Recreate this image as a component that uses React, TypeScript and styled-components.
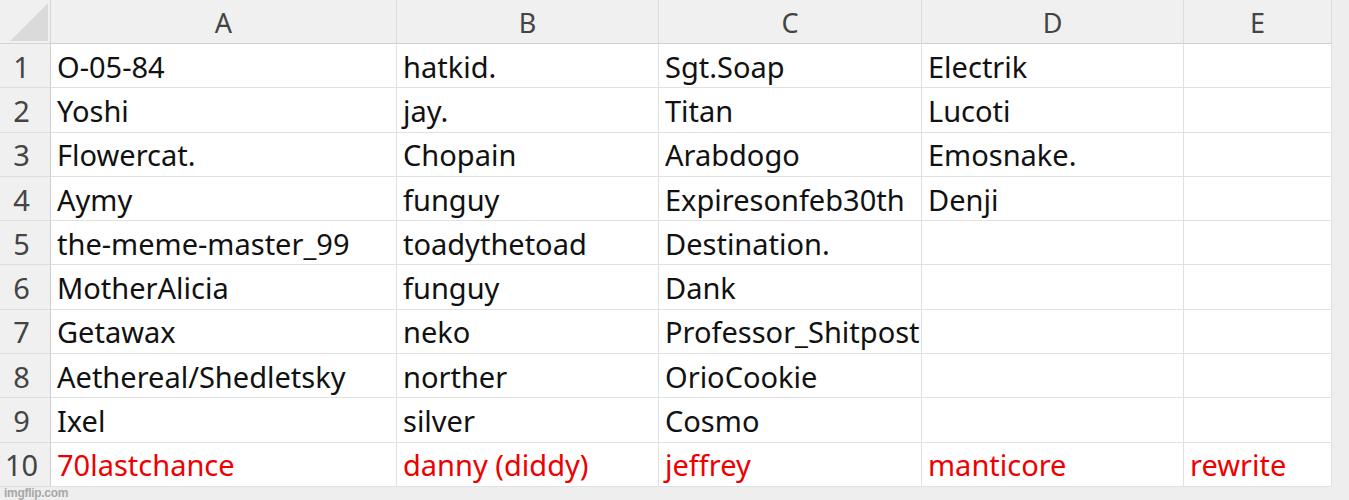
import React from "react";
import styled, { createGlobalStyle } from "styled-components";

const Global = createGlobalStyle`
  html, body { margin: 0; padding: 0; background: #eeeeee; }
  body { font-family: "Noto Sans", "Open Sans", sans-serif; }
`;

const Page = styled.div`
  position: relative;
  width: 1349px;
  height: 500px;
  background: #eeeeee;
  overflow: hidden;
`;

const Sheet = styled.div`
  display: grid;
  grid-template-columns: 51px 346px 262px 263px 262px 148px;
  grid-template-rows: 44px repeat(10, 44.3px);
  width: 1332px;
  background: #ffffff;
`;

const Corner = styled.div`
  background: #f0f0f0;
  border-right: 1px solid #d4d4d4;
  border-bottom: 1px solid #d4d4d4;
  box-sizing: border-box;
  display: flex;
  align-items: flex-end;
  justify-content: flex-end;
  padding: 0 2px 2px 0;
`;

const ColHead = styled.div`
  background: #f0f0f0;
  border-right: 1px solid #dcdcdc;
  border-bottom: 1px solid #d0d0d0;
  box-sizing: border-box;
  display: flex;
  align-items: center;
  justify-content: center;
  color: #444444;
  font-size: 27px;
  padding-top: 1px;
`;

const RowHead = styled.div`
  background: #f0f0f0;
  border-right: 1px solid #d0d0d0;
  border-bottom: 1px solid #dcdcdc;
  box-sizing: border-box;
  display: flex;
  align-items: center;
  justify-content: center;
  padding: 1px 7px 0 0;
  color: #444444;
  font-size: 29px;
`;

const Cell = styled.div<{ $red?: boolean }>`
  border-right: 1px solid #e1e1e1;
  border-bottom: 1px solid #e1e1e1;
  box-sizing: border-box;
  display: flex;
  align-items: center;
  padding: 1px 0 0 6px;
  color: ${(p) => (p.$red ? "#ee0000" : "#111111")};
  font-size: 29px;
  white-space: nowrap;
  overflow: hidden;
`;

const Watermark = styled.div`
  position: absolute;
  left: 4px;
  bottom: 0;
  line-height: 14px;
  font-family: "Liberation Sans", Arial, sans-serif;
  font-weight: bold;
  font-size: 12px;
  color: #a8a8a8;
  letter-spacing: -0.3px;
`;

const cols = ["A", "B", "C", "D", "E"];

const data: string[][] = [
  ["O-05-84", "hatkid.", "Sgt.Soap", "Electrik", ""],
  ["Yoshi", "jay.", "Titan", "Lucoti", ""],
  ["Flowercat.", "Chopain", "Arabdogo", "Emosnake.", ""],
  ["Aymy", "funguy", "Expiresonfeb30th", "Denji", ""],
  ["the-meme-master_99", "toadythetoad", "Destination.", "", ""],
  ["MotherAlicia", "funguy", "Dank", "", ""],
  ["Getawax", "neko", "Professor_Shitpost", "", ""],
  ["Aethereal/Shedletsky", "norther", "OrioCookie", "", ""],
  ["Ixel", "silver", "Cosmo", "", ""],
  ["70lastchance", "danny (diddy)", "jeffrey", "manticore", "rewrite"],
];

export default function App() {
  return (
    <Page>
      <Global />
      <Sheet>
        <Corner>
          <svg width="38" height="38" viewBox="0 0 38 38">
            <polygon points="0,38 38,38 38,0" fill="#dadada" />
          </svg>
        </Corner>
        {cols.map((c) => (
          <ColHead key={c}>{c}</ColHead>
        ))}
        {data.map((row, i) => (
          <React.Fragment key={i}>
            <RowHead>{i + 1}</RowHead>
            {row.map((v, j) => (
              <Cell key={j} $red={i === 9}>
                {v}
              </Cell>
            ))}
          </React.Fragment>
        ))}
      </Sheet>
      <Watermark>imgflip.com</Watermark>
    </Page>
  );
}
